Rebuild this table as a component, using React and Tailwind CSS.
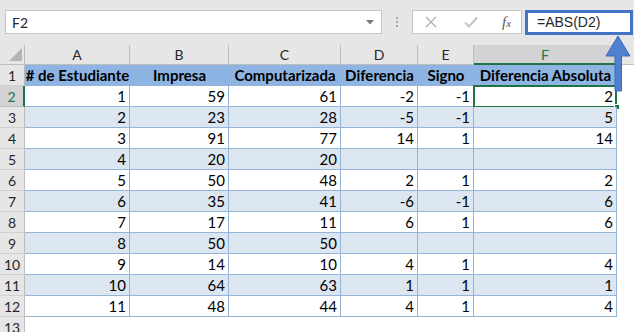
import React from 'react';

const cols = [
  { key: 'A', w: 'w-[105px]' },
  { key: 'B', w: 'w-[99px]' },
  { key: 'C', w: 'w-[112px]' },
  { key: 'D', w: 'w-[77px]' },
  { key: 'E', w: 'w-[56px]' },
  { key: 'F', w: 'w-[143px]' },
];

const headers = ['# de Estudiante', 'Impresa', 'Computarizada', 'Diferencia', 'Signo', 'Diferencia Absoluta'];

const rows = [
  [1, 59, 61, -2, -1, 2],
  [2, 23, 28, -5, -1, 5],
  [3, 91, 77, 14, 1, 14],
  [4, 20, 20, '', '', ''],
  [5, 50, 48, 2, 1, 2],
  [6, 35, 41, -6, -1, 6],
  [7, 17, 11, 6, 1, 6],
  [8, 50, 50, '', '', ''],
  [9, 14, 10, 4, 1, 4],
  [10, 64, 63, 1, 1, 1],
  [11, 48, 44, 4, 1, 4],
];

const RowHead = ({ n, active }) => (
  <div
    className={`w-[25px] shrink-0 flex items-center justify-center text-[14px] ${
      active
        ? 'bg-[#d3d3d3] text-[#217346] border-r-2 border-r-[#217346] border-b border-b-[#bdbdbd]'
        : 'bg-[#e6e6e6] text-[#262626] border-r border-r-[#bdbdbd] border-b border-b-[#d0d0d0]'
    }`}
  >
    {n}
  </div>
);

export default function App() {
  return (
    <div className="relative w-[634px] h-[332px] overflow-hidden bg-white font-['Lato','Liberation_Sans',sans-serif] text-black">
      {/* formula bar */}
      <div className="h-[45px] bg-[#e6e6e6] flex items-start pt-[10px] pl-[5px]">
        <div className="w-[377px] h-[24px] bg-white border border-[#c6c6c6] flex items-center justify-between pl-[6px] pr-[7px]">
          <span className="text-[14px] text-[#262626]">F2</span>
          <svg width="8" height="5" viewBox="0 0 8 5"><path d="M0 0h8L4 4.5z" fill="#7a7a7a" /></svg>
        </div>
        <div className="w-[30px] h-[24px] flex flex-col items-center justify-center gap-[2px]">
          <span className="w-[2px] h-[2px] bg-[#a6a6a6]" />
          <span className="w-[2px] h-[2px] bg-[#a6a6a6]" />
          <span className="w-[2px] h-[2px] bg-[#a6a6a6]" />
        </div>
        <div className="w-[110px] h-[24px] bg-white border border-[#c6c6c6] flex items-center">
          <svg className="ml-[12px]" width="12" height="12" viewBox="0 0 12 12">
            <path d="M1 1l10 10M11 1L1 11" stroke="#b3b3b3" strokeWidth="1.4" />
          </svg>
          <svg className="ml-[27px]" width="14" height="12" viewBox="0 0 14 12">
            <path d="M1 6.5l4 4L13 1.5" stroke="#c4c4c4" strokeWidth="2" fill="none" />
          </svg>
          <span className="ml-[24px] font-['Liberation_Serif',serif] italic text-[15px] text-[#595959] leading-none">
            f<span className="text-[11px]">x</span>
          </span>
        </div>
        <div className="ml-[3px] w-[108px] h-[25px] border-[3px] border-[#4472c4] bg-white flex items-center pl-[9px]">
          <span className="text-[14px] text-[#262626] font-['Liberation_Sans',sans-serif]">=ABS(D2)</span>
        </div>
      </div>

      {/* column headers */}
      <div className="flex h-[20px]">
        <div className="w-[25px] shrink-0 bg-[#e6e6e6] border-r border-r-[#bdbdbd] border-b border-b-[#bdbdbd] relative">
          <svg className="absolute left-[9px] top-[3px]" width="13" height="13" viewBox="0 0 13 13">
            <path d="M13 0v13H0z" fill="#b4b4b4" />
          </svg>
        </div>
        {cols.map(c =>
          c.key === 'F' ? (
            <div key={c.key} className={`${c.w} shrink-0 bg-[#d3d3d3] border-r border-r-[#bdbdbd] border-b-2 border-b-[#217346] flex items-center justify-center text-[14px] text-[#217346]`}>
              {c.key}
            </div>
          ) : (
            <div key={c.key} className={`${c.w} shrink-0 bg-[#e6e6e6] border-r border-r-[#bdbdbd] border-b border-b-[#bdbdbd] flex items-center justify-center text-[14px] text-[#262626]`}>
              {c.key}
            </div>
          )
        )}
        <div className="flex-1 bg-[#e6e6e6] border-b border-b-[#bdbdbd]" />
      </div>

      {/* row 1: table headers */}
      <div className="flex h-[21px]">
        <RowHead n={1} />
        {cols.map((c, i) => (
          <div key={c.key} className={`${c.w} shrink-0 bg-[#8db4e2] border-b border-b-[#95b3d7] flex items-end justify-center font-bold text-[15px] leading-[20px] whitespace-nowrap`}>
            {headers[i]}
          </div>
        ))}
      </div>

      {/* data rows */}
      {rows.map((r, ri) => (
        <div key={ri} className="flex h-[21px]">
          <RowHead n={ri + 2} active={ri === 0} />
          {cols.map((c, ci) => (
            <div
              key={c.key}
              className={`${c.w} shrink-0 relative border-r border-b border-[#95b3d7] flex items-end justify-end pr-[3px] text-[15px] leading-[20px] ${
                ri % 2 === 1 ? 'bg-[#dce6f1]' : 'bg-white'
              }`}
            >
              {r[ci]}
              {ri === 0 && ci === 5 && (
                <>
                  <div className="absolute -left-px -top-px w-[144px] h-[23px] border-2 border-[#217346]" />
                  <div className="absolute right-[-4px] bottom-[-4px] w-[6px] h-[6px] bg-[#217346] border border-white" />
                </>
              )}
            </div>
          ))}
        </div>
      ))}

      {/* row 13 */}
      <div className="flex h-[21px]">
        <RowHead n={13} />
      </div>

      {/* arrow */}
      <svg className="absolute left-[600px] top-[30px]" width="34" height="66" viewBox="0 0 34 66">
        <path d="M18 6L30 26H21.5V61H15V26H6Z" fill="#4f81d0" stroke="#3c6ab8" strokeWidth="1" strokeLinejoin="round" />
      </svg>
    </div>
  );
}
